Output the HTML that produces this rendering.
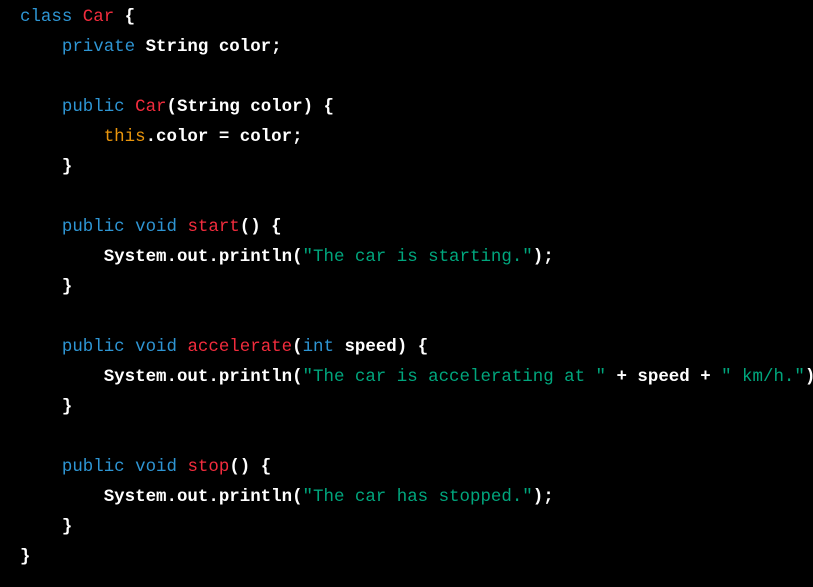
<!DOCTYPE html>
<html><head><meta charset="utf-8"><style>
html,body{margin:0;padding:0;background:#000;width:813px;height:587px;overflow:hidden}
pre{margin:0;padding:2px 0 0 20px;font-family:"Liberation Mono",monospace;font-size:17.45px;line-height:30px;color:#fff;font-weight:bold;white-space:pre}
.k{color:#2e95d3;font-weight:normal}
.t{color:#f22c3d;font-weight:normal}
.o{color:#e9950c;font-weight:normal}
.s{color:#00a67d;font-weight:normal}
</style></head><body><pre><span class="k">class</span> <span class="t">Car</span> {
    <span class="k">private</span> String color;

    <span class="k">public</span> <span class="t">Car</span>(String color) {
        <span class="o">this</span>.color = color;
    }

    <span class="k">public</span> <span class="k">void</span> <span class="t">start</span>() {
        System.out.println(<span class="s">"The car is starting."</span>);
    }

    <span class="k">public</span> <span class="k">void</span> <span class="t">accelerate</span>(<span class="k">int</span> speed) {
        System.out.println(<span class="s">"The car is accelerating at "</span> + speed + <span class="s">" km/h."</span>);
    }

    <span class="k">public</span> <span class="k">void</span> <span class="t">stop</span>() {
        System.out.println(<span class="s">"The car has stopped."</span>);
    }
}</pre></body></html>
